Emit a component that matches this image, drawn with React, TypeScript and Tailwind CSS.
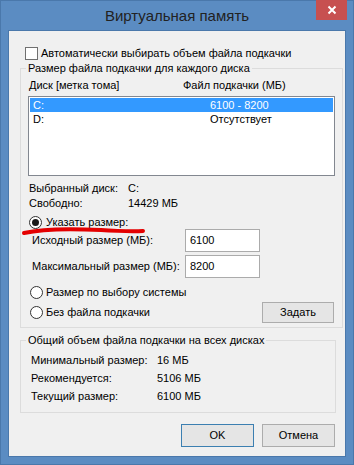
import React from "react";

const font = { fontFamily: '"Liberation Sans", Arial, sans-serif' };

function Radio({ checked }: { checked?: boolean }) {
  return (
    <span className="w-[13px] h-[13px] rounded-full border border-[#333333] bg-white flex items-center justify-center shrink-0">
      {checked && <span className="w-[7px] h-[7px] rounded-full bg-[#1a1a1a]" />}
    </span>
  );
}

function Btn({ children, def }: { children: React.ReactNode; def?: boolean }) {
  return (
    <div
      className={
        "w-[73px] h-[23px] flex items-center justify-center bg-[#e5e5e5] border " +
        (def ? "border-[#3c7fb1]" : "border-[#acacac]")
      }
    >
      {children}
    </div>
  );
}

export default function App() {
  return (
    <div
      className="relative w-[354px] h-[465px] bg-[#5b8cc2] border border-[#4a78ab] flex flex-col text-[11px] leading-[15px] text-black whitespace-nowrap"
      style={font}
    >
      {/* Title bar */}
      <div className="h-[29px] grid grid-cols-[1fr_auto_1fr] items-start">
        <div />
        <div className="pt-[5px] text-[15px] leading-[20px] text-[#222222]">Виртуальная память</div>
        <div className="flex justify-end pr-[6px]">
          <div className="w-[31px] h-[20px] bg-[#c75050] flex items-center justify-center -mt-px">
            <svg width="10" height="10" viewBox="0 0 10 10">
              <path d="M1.5 1.5 L8.5 8.5 M8.5 1.5 L1.5 8.5" stroke="white" strokeWidth="2" />
            </svg>
          </div>
        </div>
      </div>

      {/* Client area */}
      <div className="ml-[7px] w-[338px] h-[427px] bg-[#f0f0f0] border border-[#4a78ab] flex flex-col pl-[11px] pr-[9px]">
        {/* Auto checkbox */}
        <div className="flex items-center gap-[3px] mt-[15px] ml-[5px] h-[15px]">
          <span className="w-[13px] h-[13px] border border-[#707070] bg-white shrink-0" />
          <span>Автоматически выбирать объем файла подкачки</span>
        </div>

        {/* Group 1 */}
        <fieldset className="mt-0 border border-[#dcdcdc] h-[267px] px-[7px] relative">
          <legend className="ml-[-2px] px-[2px] leading-[15px]">Размер файла подкачки для каждого диска</legend>
          <div className="flex h-[15px] mt-[2px] ml-[1px]">
            <span className="w-[154px]">Диск [метка тома]</span>
            <span>Файл подкачки (МБ)</span>
          </div>
          <div className="mt-[3px] h-[80px] w-[307px] border border-[#828790] bg-white p-px">
            <div className="flex h-[14px] bg-[#3399ff] text-white items-center">
              <span className="w-[180px] pl-[3px]">C:</span>
              <span>6100 - 8200</span>
            </div>
            <div className="flex h-[14px] items-center">
              <span className="w-[180px] pl-[3px]">D:</span>
              <span>Отсутствует</span>
            </div>
          </div>
          <div className="mt-[5px] ml-[1px] flex flex-col">
            <div className="flex h-[15px]">
              <span className="w-[99px]">Выбранный диск:</span>
              <span>C:</span>
            </div>
            <div className="flex h-[15px]">
              <span className="w-[99px]">Свободно:</span>
              <span>14429 МБ</span>
            </div>
          </div>
          <div className="mt-[4px] ml-px flex items-center gap-[4px] h-[15px]">
            <Radio checked />
            <span>Указать размер:</span>
          </div>
          <div className="mt-[-1px] flex items-center h-[23px]">
            <span className="w-[157px] pl-[4px]">Исходный размер (МБ):</span>
            <div className="w-[75px] h-[23px] border border-[#ababab] bg-white pl-[4px] flex items-center">6100</div>
          </div>
          <div className="mt-[3px] flex items-center h-[23px]">
            <span className="w-[157px] pl-[4px]">Максимальный размер (МБ):</span>
            <div className="w-[75px] h-[23px] border border-[#ababab] bg-white pl-[4px] flex items-center">8200</div>
          </div>
          <div className="mt-[7px] ml-[2px] flex items-center gap-[3px] h-[15px]">
            <Radio />
            <span>Размер по выбору системы</span>
          </div>
          <div className="mt-px flex items-center justify-between h-[22px]">
            <div className="ml-[2px] flex items-center gap-[3px]">
              <Radio />
              <span>Без файла подкачки</span>
            </div>
            <div className="mr-[1px]">
              <div className="w-[72px] h-[21px] flex items-center justify-center bg-[#e5e5e5] border border-[#acacac]">Задать</div>
            </div>
          </div>
        </fieldset>

        {/* Group 2 */}
        <fieldset className="mt-[5px] border border-[#dcdcdc] h-[80px] px-[10px]">
          <legend className="ml-[-5px] px-[2px] leading-[15px]">Общий объем файла подкачки на всех дисках</legend>
          <div className="flex flex-col gap-[3px] mt-[5px]">
            <div className="flex h-[15px]">
              <span className="w-[126px]">Минимальный размер:</span>
              <span>16 МБ</span>
            </div>
            <div className="flex h-[15px]">
              <span className="w-[126px]">Рекомендуется:</span>
              <span>5106 МБ</span>
            </div>
            <div className="flex h-[15px]">
              <span className="w-[126px]">Текущий размер:</span>
              <span>6100 МБ</span>
            </div>
          </div>
        </fieldset>

        <div className="mt-[11px] flex justify-end gap-[8px] mr-[1px]">
          <Btn def>OK</Btn>
          <Btn>Отмена</Btn>
        </div>
      </div>

      {/* red hand-drawn underline */}
      <svg className="absolute left-0 top-0 pointer-events-none" width="354" height="465">
        <path d="M23 232 C 40 228, 70 227.5, 100 229 S 130 231, 142 230" stroke="#e40000" strokeWidth="4" fill="none" strokeLinecap="round" />
      </svg>
    </div>
  );
}
